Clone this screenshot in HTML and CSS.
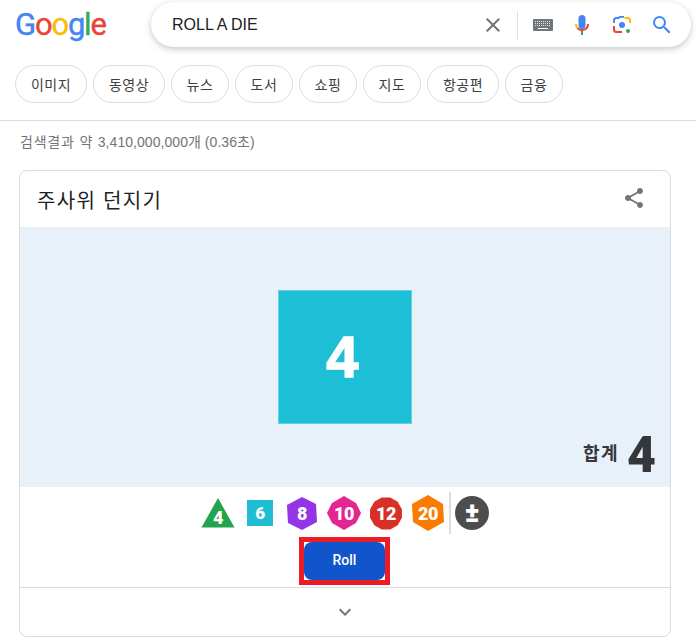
FILE: index.html
```html
<!DOCTYPE html>
<html lang="ko">
<head>
<meta charset="UTF-8">
<meta name="viewport" content="width=device-width, initial-scale=1.0">
<title>ROLL A DIE</title>
<link rel="stylesheet" href="styles.css">
</head>
<body>
<header class="top">
  <div class="logo"><span class="blue">G</span><span class="red">o</span><span class="yellow">o</span><span class="blue">g</span><span class="green">l</span><span class="red">e</span></div>
  <div class="search">
    <div class="query">ROLL A DIE</div>
    <svg class="icon-close" viewBox="0 0 24 24"><path fill="#70757a" d="M19 6.41L17.59 5 12 10.59 6.41 5 5 6.41 10.59 12 5 17.59 6.41 19 12 13.41 17.59 19 19 17.59 13.41 12z"/></svg>
    <div class="search-sep"></div>
    <svg class="icon-keys" viewBox="0 0 20 12">
      <rect width="20" height="12" rx="1" fill="#70757a"/>
      <path stroke="#fff" stroke-width="1" stroke-dasharray="1 1" opacity="0.8" d="M2 2.5h16M2 4.5h16M2 6.5h16"/>
      <path stroke="#fff" stroke-width="1" d="M5 9.5h10"/>
    </svg>
    <svg class="icon-mic" viewBox="0 0 14 20">
      <rect x="3.500" y="0" width="7" height="14" rx="3.500" fill="#4285f4"/>
      <path d="M1 9c0 2 .5 3.200 1.500 4.200" fill="none" stroke="#fbbc04" stroke-width="2"/>
      <path d="M2.500 13.200c1 1 2.700 1.800 4.500 1.800s3.500-.8 4.500-1.800c1-1 1.500-2.200 1.500-4.200" fill="none" stroke="#ea4335" stroke-width="2"/>
      <rect x="6" y="16" width="2" height="4" fill="#34a853"/>
    </svg>
    <svg class="icon-lens" viewBox="0 0 18 18">
      <path d="M1 7V4.500C1 3 2 2 3.500 2H5.500L7 .8h4" fill="none" stroke="#4285f4" stroke-width="2"/>
      <path d="M11.500 2h3C16 2 17 3 17 4.500V7" fill="none" stroke="#fbbc04" stroke-width="2"/>
      <path d="M1 10v3.500C1 15 2 16 3.500 16H9" fill="none" stroke="#ea4335" stroke-width="2"/>
      <circle cx="9" cy="9" r="3" fill="#4285f4"/>
      <circle cx="15" cy="15" r="2" fill="#34a853"/>
    </svg>
    <svg class="icon-search" viewBox="3 3 18 18"><path fill="#4285f4" d="M15.500 14h-.79l-.28-.27A6.471 6.471 0 0 0 16 9.500 6.500 6.500 0 1 0 9.500 16c1.610 0 3.090-.59 4.230-1.570l.27.28v.79l5 4.990L20.490 19l-4.990-5zm-6 0C7.010 14 5 11.990 5 9.500S7.010 5 9.500 5 14 7.010 14 9.500 11.990 14 9.500 14z"/></svg>
  </div>
</header>

<nav class="chips">
  <a class="chip wide">이미지</a>
  <a class="chip wide">동영상</a>
  <a class="chip">뉴스</a>
  <a class="chip">도서</a>
  <a class="chip">쇼핑</a>
  <a class="chip">지도</a>
  <a class="chip wide">항공편</a>
  <a class="chip">금융</a>
</nav>

<div class="stats"><span class="stats-ko">검색결과 약 </span>3,410,000,000개 (0.36초)</div>

<section class="card">
  <div class="card-head">
    <h2>주사위 던지기</h2>
    <svg class="icon-share" viewBox="0 0 24 24"><path fill="#70757a" d="M18 16.080c-.76 0-1.440.3-1.960.77L8.910 12.700c.05-.23.09-.46.09-.7s-.04-.47-.09-.7l7.050-4.110c.54.5 1.250.81 2.040.81 1.660 0 3-1.340 3-3s-1.340-3-3-3-3 1.340-3 3c0 .24.04.47.09.7L8.040 9.810C7.500 9.310 6.790 9 6 9c-1.660 0-3 1.340-3 3s1.340 3 3 3c.79 0 1.500-.31 2.040-.81l7.120 4.160c-.05.21-.08.43-.08.65 0 1.610 1.310 2.920 2.920 2.920 1.610 0 2.920-1.310 2.920-2.920s-1.310-2.920-2.920-2.920z"/></svg>
  </div>

  <div class="stage">
    <div class="big-die">4</div>
    <div class="total"><span class="total-label">합계</span><span class="total-num">4</span></div>
  </div>

  <div class="dice">
    <svg class="d d4" viewBox="0 0 34 30"><polygon points="17,0 33.500,29.500 .5,29.500" fill="#21a44d"/><text x="17" y="25.500" font-size="18">4</text></svg>
    <svg class="d d6" viewBox="0 0 26 26"><rect width="26" height="26" fill="#1fbdd3"/><text x="13" y="19" font-size="17">6</text></svg>
    <svg class="d d8" viewBox="0 0 30 33"><polygon points="15,0 29,7 30,25 15,33 1,26 0,8" fill="#9334e6"/><text x="15" y="23" font-size="18">8</text></svg>
    <svg class="d d10" viewBox="0 0 34 34"><polygon points="17,0 29,7 34,17 29,27 17,34 5,27 0,17 5,7" fill="#e52592"/><text x="17" y="23.500" font-size="18">10</text></svg>
    <svg class="d d12" viewBox="0 0 32 33"><polygon points="20.270,.56 27.670,4.830 31.940,12.230 31.940,20.770 27.670,28.170 20.270,32.440 11.730,32.440 4.330,28.170 .06,20.770 .06,12.230 4.330,4.830 11.730,.56" fill="#d93025"/><text x="16" y="23" font-size="18">12</text></svg>
    <svg class="d d20" viewBox="0 0 32 36"><polygon points="16,0 31,9 32,27 16,36 1,27 0,9" fill="#fa7b00"/><text x="16" y="24.500" font-size="18">20</text></svg>
    <div class="dice-sep"></div>
    <svg class="d dpm" viewBox="0 0 34 36"><circle cx="17" cy="18" r="17" fill="#4d4d4d"/><text x="17" y="27" font-size="27">±</text></svg>
  </div>

  <div class="roll-row">
    <div class="roll-mark"><button class="roll">Roll</button></div>
  </div>

  <div class="card-foot">
    <svg class="icon-chev" viewBox="0 0 24 24"><path fill="#70757a" d="M16.590 8.590L12 13.170 7.410 8.590 6 10l6 6 6-6z"/></svg>
  </div>
</section>
</body>
</html>
```

FILE: styles.css
```css
body {
  margin: 0;
  background: #fff;
  font-family: "Liberation Sans", "Noto Sans CJK KR", sans-serif;
  color: #202124;
  overflow: hidden;
}

.top {
  display: flex;
  align-items: center;
  height: 45px;
  padding: 2px 5px 0 15px;
}

.logo {
  width: 136px;
  font-family: "Roboto", sans-serif;
  font-size: 31px;
  font-weight: 400;
  letter-spacing: -1.2px;
  line-height: 45px;
  -webkit-text-stroke: 0.4px;
}

.blue { color: #4285f4; }
.red { color: #ea4335; }
.yellow { color: #fbbc05; }
.green { color: #34a853; }

.search {
  display: flex;
  align-items: center;
  flex: 1;
  height: 45px;
  border-radius: 23px;
  background: #fff;
  box-shadow: 0 2px 6px rgba(32, 33, 36, 0.26);
  padding-left: 21px;
}

.query {
  flex: 1;
  font-size: 16px;
  color: #202124;
}

.search svg {
  display: block;
}

.icon-close { width: 24px; height: 24px; margin-right: 12px; }
.search-sep { width: 1px; height: 28px; background: #dfe1e5; margin-right: 15px; }
.icon-keys { width: 20px; height: 12px; margin-right: 22px; }
.icon-mic { width: 14px; height: 20px; margin-right: 24px; }
.icon-lens { width: 18px; height: 18px; margin-right: 22px; }
.icon-search { width: 18px; height: 18px; margin-right: 20px; }

.chips {
  display: flex;
  gap: 6px;
  padding: 18px 15px 17px;
  border-bottom: 1px solid #dadce0;
}

.chip {
  box-sizing: border-box;
  width: 58px;
  height: 38px;
  line-height: 36px;
  text-align: center;
  border: 1px solid #dadce0;
  border-radius: 19px;
  font-family: "Noto Sans CJK KR", sans-serif;
  font-size: 14px;
  letter-spacing: 0.5px;
  color: #3c4043;
}

.chip.wide {
  width: 72px;
}

.stats {
  padding: 12px 0 0 20px;
  height: 37px;
  font-size: 14px;
  letter-spacing: 0.05px;
  line-height: 18px;
  color: #70757a;
}

.stats-ko {
  letter-spacing: 0.8px;
}

.card {
  box-sizing: border-box;
  width: 652px;
  height: 467px;
  margin-left: 19px;
  border: 1px solid #dadce0;
  border-radius: 8px;
  overflow: hidden;
}

.card-head {
  display: flex;
  align-items: center;
  justify-content: space-between;
  height: 56px;
  padding: 0 24px 0 17px;
}

.card-head h2 {
  margin: 0;
  font-family: "Noto Sans CJK KR", sans-serif;
  font-size: 20px;
  font-weight: 400;
  letter-spacing: 1.3px;
  color: #202124;
}

.icon-share { width: 24px; height: 24px; margin-top: -3px; }

.stage {
  position: relative;
  display: flex;
  justify-content: center;
  height: 260px;
  padding-top: 63px;
  box-sizing: border-box;
  background: #e8f0fa;
}

.big-die {
  box-sizing: border-box;
  width: 134px;
  height: 134px;
  padding-right: 5px;
  background: #1cbfd5;
  box-shadow: inset 0 0 0 1px #62d3e3;
  color: #fff;
  font-family: "Liberation Sans", sans-serif;
  font-size: 58px;
  font-weight: 700;
  line-height: 134px;
  text-align: center;
  -webkit-text-stroke: 1.5px #fff;
}

.total {
  position: absolute;
  right: 14px;
  bottom: 4px;
  display: flex;
  align-items: center;
  gap: 8px;
  color: #35373a;
}

.total-label {
  font-family: "Noto Sans CJK KR", sans-serif;
  font-size: 18px;
  font-weight: 700;
  letter-spacing: 1.5px;
  margin-top: -6px;
}

.total-num {
  font-family: "Roboto", sans-serif;
  font-size: 50px;
  font-weight: 900;
  line-height: 56px;
}

.dice {
  box-sizing: border-box;
  display: flex;
  align-items: center;
  height: 50px;
  padding: 2px 0 0 181px;
}

.d {
  display: block;
  flex: none;
}

.d text {
  fill: #fff;
  font-family: "Roboto", sans-serif;
  font-weight: 900;
  letter-spacing: -0.5px;
  text-anchor: middle;
}

.d4 { width: 34px; height: 30px; margin-right: 12px; }
.d6 { width: 26px; height: 26px; margin-right: 14px; }
.d8 { width: 30px; height: 33px; margin-right: 10px; }
.d10 { width: 34px; height: 34px; margin-right: 9px; }
.d12 { width: 32px; height: 33px; margin-right: 10px; }
.d20 { width: 32px; height: 36px; margin-right: 5px; }
.dpm { width: 34px; height: 36px; margin-left: 4px; }

.dice-sep {
  width: 2px;
  height: 42px;
  background: #dadce0;
}

.roll-row {
  display: flex;
  justify-content: center;
  height: 50px;
  border-bottom: 1px solid #dadce0;
}

.roll-mark {
  border: 5px solid #ed1c24;
  height: 38px;
  margin-left: -1px;
}

.roll {
  display: block;
  width: 81px;
  height: 38px;
  border: none;
  border-radius: 8px;
  background: #1155cc;
  color: #fff;
  font-family: "Roboto", sans-serif;
  font-size: 14px;
  font-weight: 500;
  padding: 0 0 2px;
}

.card-foot {
  display: flex;
  justify-content: center;
  align-items: center;
  height: 48px;
}

.icon-chev { width: 24px; height: 24px; }
```
